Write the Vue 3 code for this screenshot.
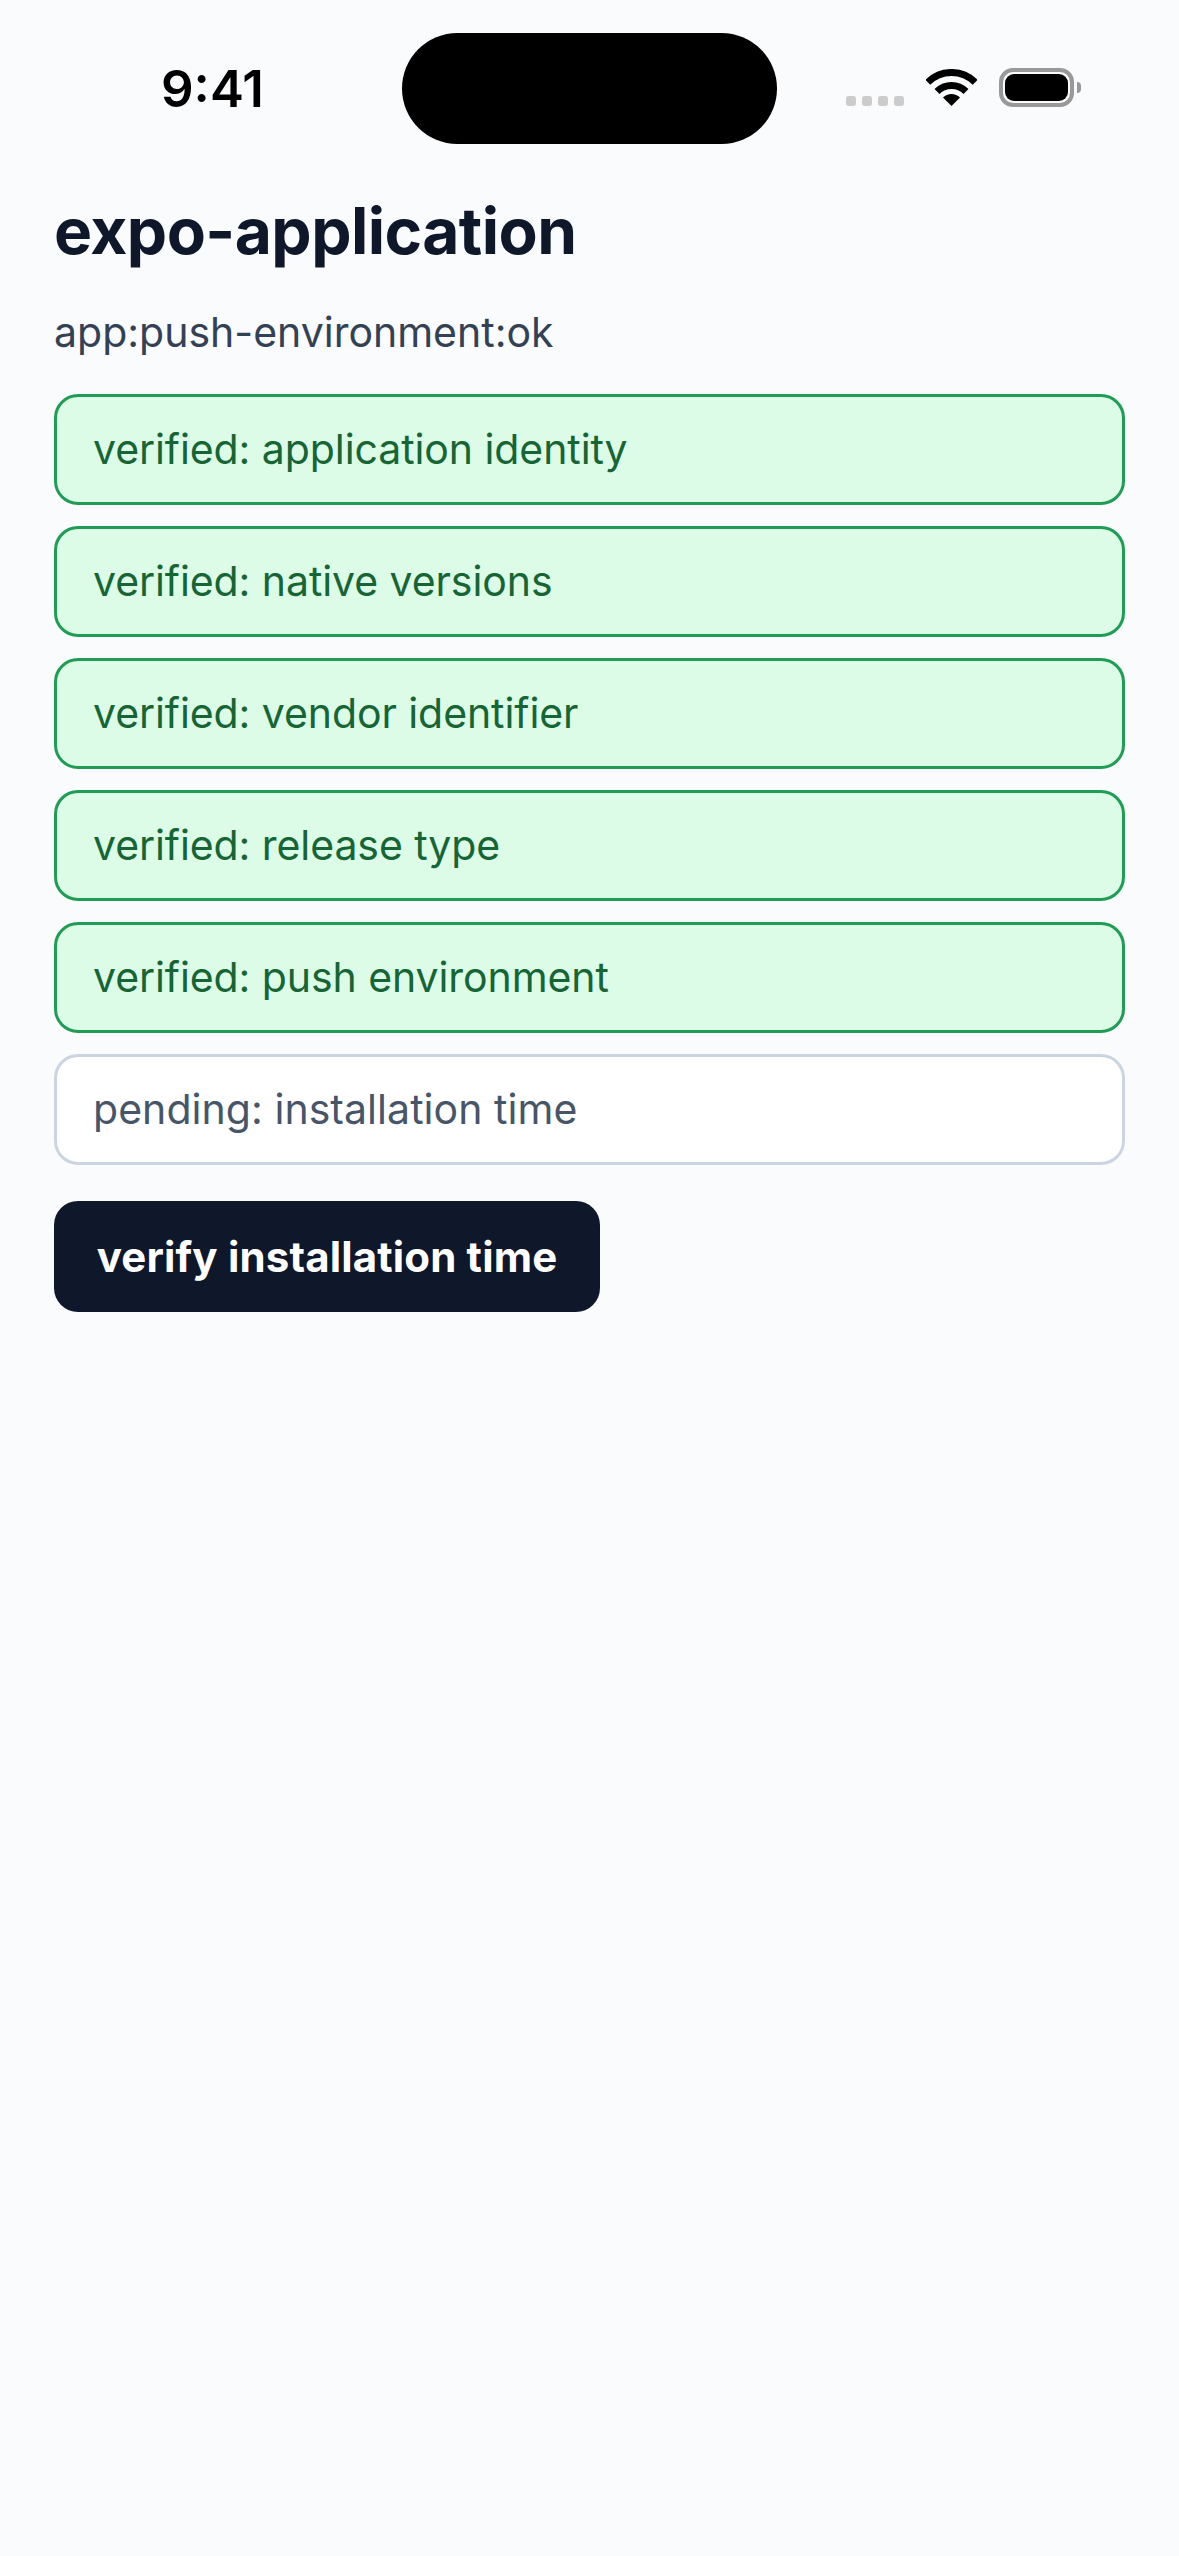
<script setup>
const rows = [
  { text: 'verified: application identity', ok: true },
  { text: 'verified: native versions', ok: true },
  { text: 'verified: vendor identifier', ok: true },
  { text: 'verified: release type', ok: true },
  { text: 'verified: push environment', ok: true },
  { text: 'pending: installation time', ok: false },
]
</script>

<template>
  <div class="screen">
    <header class="status">
      <div class="time-slot"><span class="time">9:41</span></div>
      <div class="island"></div>
      <div class="icons">
        <div class="cell"><i></i><i></i><i></i><i></i></div>
        <svg class="wifi" width="51" height="37" viewBox="0 0 51 37">
          <path d="M1.8 13.3A33.5 33.5 0 0 1 49.2 13.3" fill="none" stroke="#000" stroke-width="7" />
          <path d="M11 22.5A20.5 20.5 0 0 1 40 22.5" fill="none" stroke="#000" stroke-width="7" />
          <path d="M25.5 37L17 28.5A12 12 0 0 1 34 28.5Z" fill="#000" />
        </svg>
        <div class="battery"><div class="level"></div></div>
        <div class="nub"></div>
      </div>
    </header>
    <main class="content">
      <h1 class="title">expo-application</h1>
      <p class="sub">app:push-environment:ok</p>
      <div class="list">
        <div v-for="r in rows" :key="r.text" class="row" :class="r.ok ? 'ok' : 'pending'">{{ r.text }}</div>
      </div>
      <button class="btn">verify installation time</button>
    </main>
  </div>
</template>

<style scoped>
.screen {
  width: 1179px;
  height: 2556px;
  background: #fafbfd;
  font-family: Inter, "Noto Sans", sans-serif;
  overflow: hidden;
}
.status {
  display: flex;
  align-items: flex-start;
  height: 144px;
  padding-top: 33px;
  box-sizing: border-box;
}
.time-slot {
  width: 402px;
  padding-top: 26px;
  padding-left: 161px;
  box-sizing: border-box;
}
.time {
  display: block;
  font-size: 51px;
  line-height: 60px;
  font-weight: 600;
  color: #000;
}
.island {
  width: 375px;
  height: 111px;
  border-radius: 56px;
  background: #000;
}
.icons {
  display: flex;
  align-items: flex-end;
  padding-left: 69px;
  padding-top: 35px;
}
.cell {
  display: flex;
  gap: 6px;
  margin-right: 22px;
  margin-bottom: 1px;
}
.cell i {
  width: 10px;
  height: 10px;
  border-radius: 3px;
  background: #ccc;
}
.wifi {
  margin-right: 22px;
  margin-bottom: 1px;
}
.battery {
  width: 75px;
  height: 39px;
  box-sizing: border-box;
  border: 4px solid #999;
  border-radius: 14px;
  padding: 2px;
}
.level {
  height: 100%;
  border-radius: 9px;
  background: #000;
}
.nub {
  width: 4px;
  height: 11px;
  margin-left: 3px;
  margin-bottom: 14px;
  border-radius: 0 6px 6px 0;
  background: #999;
}
.content {
  display: flex;
  flex-direction: column;
  align-items: flex-start;
  padding: 48px 54px 0;
}
.title {
  margin: 0;
  font-size: 64px;
  line-height: 78px;
  font-weight: 700;
  letter-spacing: -0.55px;
  color: #0f172a;
}
.sub {
  margin: 32px 0 0;
  font-size: 41px;
  line-height: 60px;
  color: #334155;
}
.list {
  align-self: stretch;
  display: flex;
  flex-direction: column;
  gap: 21px;
  margin-top: 32px;
}
.row {
  box-sizing: border-box;
  height: 111px;
  display: flex;
  align-items: center;
  padding: 0 36px 2px;
  border: 3px solid;
  border-radius: 24px;
  font-size: 41px;
}
.ok {
  background: #dcfce7;
  border-color: #1f9d55;
  color: #166534;
  letter-spacing: -0.08px;
}
.pending {
  background: #fff;
  border-color: #cbd5e1;
  color: #475569;
  letter-spacing: 0.05px;
}
.btn {
  margin-top: 36px;
  box-sizing: border-box;
  width: 546px;
  height: 111px;
  border: 0;
  border-radius: 24px;
  background: #0f172a;
  color: #fff;
  font-family: inherit;
  font-size: 42px;
  font-weight: 700;
  letter-spacing: 0.15px;
}
</style>
